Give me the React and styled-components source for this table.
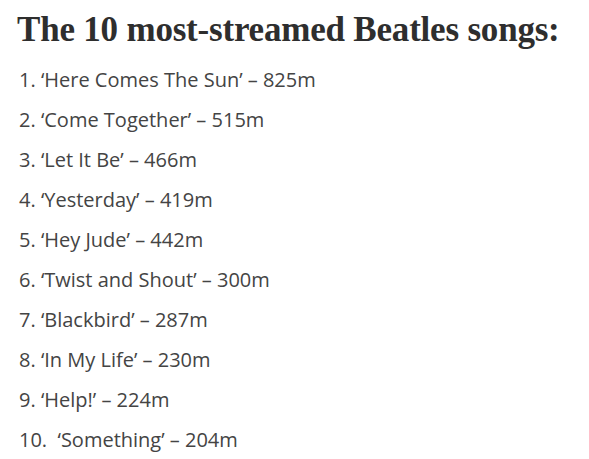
import React from "react";
import styled, { createGlobalStyle } from "styled-components";

const Global = createGlobalStyle`
  html, body { margin: 0; padding: 0; background: #fff; }
  body { font-family: "Open Sans", "Liberation Sans", sans-serif; }
`;

const Page = styled.div`
  padding: 10px 20px 0 17px;
`;

const Title = styled.h2`
  margin: 0 0 10px 0;
  font-family: "Liberation Serif", "DejaVu Serif", serif;
  font-weight: 700;
  font-size: 35px;
  line-height: 40px;
  letter-spacing: -0.2px;
  color: #2e2e2e;
  white-space: nowrap;
`;

const List = styled.div`
  display: flex;
  flex-direction: column;
  padding-left: 2px;
`;

const Item = styled.p`
  margin: 0;
  font-size: 20px;
  line-height: 40px;
  color: #444;
  white-space: pre;
`;

const songs = [
  "1. ‘Here Comes The Sun’ – 825m",
  "2. ‘Come Together’ – 515m",
  "3. ‘Let It Be’ – 466m",
  "4. ‘Yesterday’ – 419m",
  "5. ‘Hey Jude’ – 442m",
  "6. ‘Twist and Shout’ – 300m",
  "7. ‘Blackbird’ – 287m",
  "8. ‘In My Life’ – 230m",
  "9. ‘Help!’ – 224m",
  "10.  ‘Something’ – 204m",
];

export default function App() {
  return (
    <Page>
      <Global />
      <Title>The 10 most-streamed Beatles songs:</Title>
      <List>
        {songs.map((s) => (
          <Item key={s}>{s}</Item>
        ))}
      </List>
    </Page>
  );
}
